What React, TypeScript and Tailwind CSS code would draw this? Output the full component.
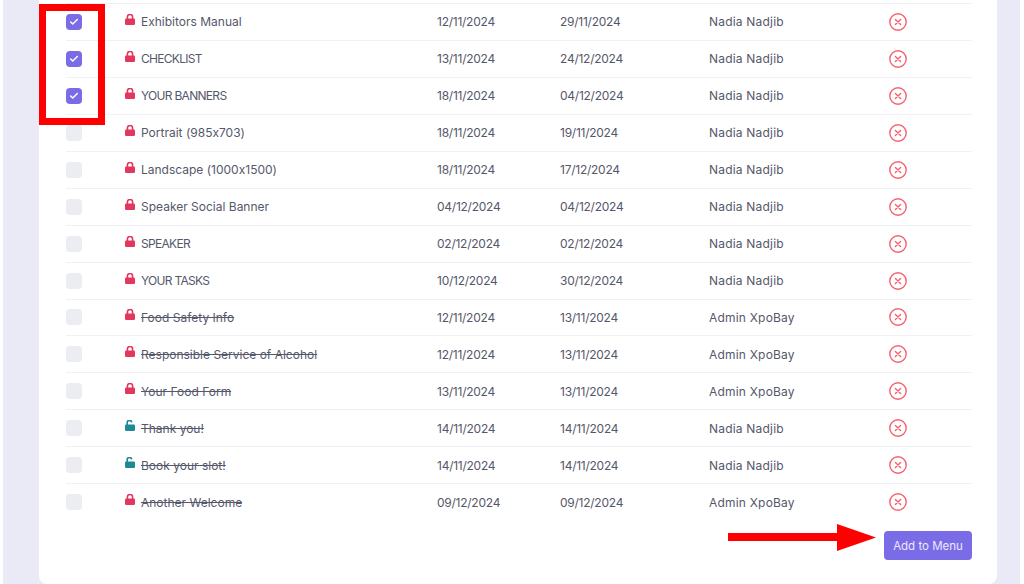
import { Check } from 'lucide-react';

type Row = {
  name: string;
  start: string;
  end: string;
  by: string;
  checked?: boolean;
  done?: boolean;
  open?: boolean;
  caps?: boolean;
};

const rows: Row[] = [
  { name: 'Exhibitors Manual', start: '12/11/2024', end: '29/11/2024', by: 'Nadia Nadjib', checked: true },
  { name: 'CHECKLIST', start: '13/11/2024', end: '24/12/2024', by: 'Nadia Nadjib', checked: true, caps: true },
  { name: 'YOUR BANNERS', start: '18/11/2024', end: '04/12/2024', by: 'Nadia Nadjib', checked: true, caps: true },
  { name: 'Portrait (985x703)', start: '18/11/2024', end: '19/11/2024', by: 'Nadia Nadjib' },
  { name: 'Landscape (1000x1500)', start: '18/11/2024', end: '17/12/2024', by: 'Nadia Nadjib' },
  { name: 'Speaker Social Banner', start: '04/12/2024', end: '04/12/2024', by: 'Nadia Nadjib' },
  { name: 'SPEAKER', start: '02/12/2024', end: '02/12/2024', by: 'Nadia Nadjib', caps: true },
  { name: 'YOUR TASKS', start: '10/12/2024', end: '30/12/2024', by: 'Nadia Nadjib', caps: true },
  { name: 'Food Safety Info', start: '12/11/2024', end: '13/11/2024', by: 'Admin XpoBay', done: true },
  { name: 'Responsible Service of Alcohol', start: '12/11/2024', end: '13/11/2024', by: 'Admin XpoBay', done: true },
  { name: 'Your Food Form', start: '13/11/2024', end: '13/11/2024', by: 'Admin XpoBay', done: true },
  { name: 'Thank you!', start: '14/11/2024', end: '14/11/2024', by: 'Nadia Nadjib', done: true, open: true },
  { name: 'Book your slot!', start: '14/11/2024', end: '14/11/2024', by: 'Nadia Nadjib', done: true, open: true },
  { name: 'Another Welcome', start: '09/12/2024', end: '09/12/2024', by: 'Admin XpoBay', done: true },
];

const Lock = ({ open }: { open?: boolean }) => (
  <svg viewBox="0 0 10 11" className={open ? 'h-[11px] w-2.5 text-[#1f8a96]' : 'h-[11px] w-2.5 text-[#e2385f]'}>
    <path
      d={open ? 'M2.2 5V2.9a2.2 2.2 0 0 1 4.4-.6' : 'M2.4 5V3a2.6 2.6 0 0 1 5.2 0V5'}
      fill="none"
      stroke="currentColor"
      strokeWidth="1.6"
    />
    <rect x="0" y="4.4" width="10" height="6.6" rx="1.2" fill="currentColor" />
  </svg>
);

const Remove = () => (
  <svg viewBox="0 0 18 18" className="h-[18px] w-[18px] text-[#f4626f]" fill="none" stroke="currentColor">
    <circle cx="9" cy="9" r="8.2" strokeWidth="1.4" />
    <path d="M6.4 6.4l5.2 5.2M11.6 6.4l-5.2 5.2" strokeWidth="1.4" strokeLinecap="round" />
  </svg>
);

export default function App() {
  return (
    <div className="relative h-[584px] w-[1024px] overflow-hidden bg-white font-['Inter',sans-serif] [font-feature-settings:'calt'_0]">
      <div className="ml-[3px] mr-[4px] h-full bg-[#e9eaf5] pl-[36px] pr-[23px]">
        <div className="h-full rounded-b-lg bg-white pl-[27px] pr-[25px] pt-[3px]">
          <div>
            {rows.map((r) => (
              <div key={r.name} className="flex h-[36.95px] items-center border-t border-[#f0f1f5] text-[12px] leading-4 text-[#55586a]">
                <div className="w-[59px]">
                  <span className={r.checked ? 'flex h-4 w-4 items-center justify-center rounded bg-[#7a6ce6]' : 'block h-4 w-4 rounded bg-[#ecedf3]'}>
                    {r.checked && <Check className="h-2.5 w-2.5 text-white" strokeWidth={3.5} />}
                  </span>
                </div>
                <div className="flex w-[312px] items-center gap-[6px]">
                  <span className="-mt-[5px]"><Lock open={r.open} /></span>
                  <span className={r.done ? 'pt-px line-through' : r.caps ? 'pt-px tracking-[-0.7px]' : 'pt-px'}>{r.name}</span>
                </div>
                <div className="w-[123px] pt-px tracking-[-0.25px]">{r.start}</div>
                <div className="w-[149px] pt-px tracking-[-0.25px]">{r.end}</div>
                <div className="w-[180px] pt-px tracking-[0.2px]">{r.by}</div>
                <Remove />
              </div>
            ))}
          </div>
          <div className="flex justify-end pt-[11px]">
            <button className="h-[29px] w-[88px] rounded bg-[#7a6ce6] pt-px text-[11.5px] text-[#ece9fc]">Add to Menu</button>
          </div>
        </div>
      </div>
      <div className="absolute left-[39px] top-[4px] h-[121px] w-[66px] border-[7px] border-[#ff0000]" />
      <svg className="absolute left-[728px] top-[524px]" width="150" height="28" viewBox="0 0 150 28">
        <path d="M0 9h109V0l39 13.5L109 27v-10H0z" fill="#ff0000" />
      </svg>
    </div>
  );
}
